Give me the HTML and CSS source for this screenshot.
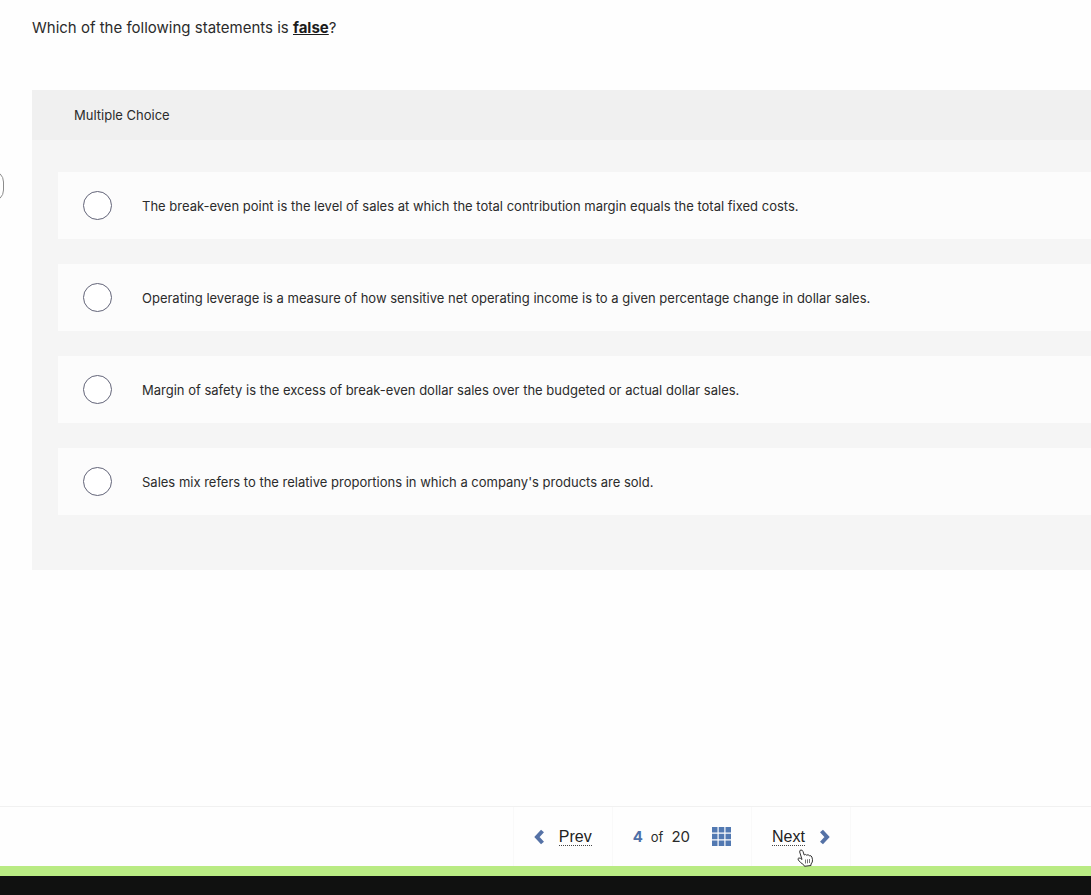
FILE: index.html
```html
<!DOCTYPE html>
<html lang="en">
<head>
  <meta charset="UTF-8">
  <meta name="viewport" content="width=device-width, initial-scale=1.0">
  <title>Question 4 of 20</title>
  <link rel="stylesheet" href="styles.css">
</head>
<body>
  <button type="button" class="drawer-toggle" aria-label="Open panel"></button>

  <main class="content">
    <p class="question">Which of the following statements is <strong>false</strong>?</p>

    <form class="panel">
      <h2 class="panel-title">Multiple Choice</h2>
      <div class="choices">
        <label class="choice" for="choice1">
          <input type="radio" id="choice1" name="answer" value="1">
          <span>The break-even point is the level of sales at which the total contribution margin equals the total fixed costs.</span>
        </label>
        <label class="choice" for="choice2">
          <input type="radio" id="choice2" name="answer" value="2">
          <span>Operating leverage is a measure of how sensitive net operating income is to a given percentage change in dollar sales.</span>
        </label>
        <label class="choice" for="choice3">
          <input type="radio" id="choice3" name="answer" value="3">
          <span>Margin of safety is the excess of break-even dollar sales over the budgeted or actual dollar sales.</span>
        </label>
        <label class="choice" for="choice4">
          <input type="radio" id="choice4" name="answer" value="4">
          <span>Sales mix refers to the relative proportions in which a company's products are sold.</span>
        </label>
      </div>
    </form>
  </main>

  <footer>
    <nav class="pager">
      <a href="#prev" class="pager-link">
        <svg width="10" height="16" viewBox="0 0 10 16"><path d="M8.500 2L3 8l5.500 6"/></svg>
        <span class="pager-text">Prev</span>
      </a>
      <div class="pager-count">
        <span><b>4</b><small>of</small>20</span>
        <button type="button" class="grid-button" aria-label="All questions">
          <svg width="19" height="19" viewBox="0 0 19 19">
            <path d="M0 0h5.500v5.500H0zM6.700 0h5.600v5.500H6.700zM13.500 0H19v5.500h-5.500zM0 6.700h5.500v5.600H0zM6.700 6.700h5.600v5.600H6.700zM13.500 6.700H19v5.600h-5.500zM0 13.500h5.500V19H0zM6.700 13.500h5.600V19H6.700zM13.500 13.500H19V19h-5.500z"/>
          </svg>
        </button>
      </div>
      <a href="#next" class="pager-link pager-next">
        <span class="pager-text">Next</span>
        <svg width="10" height="16" viewBox="0 0 10 16"><path d="M1.500 2L7 8l-5.500 6"/></svg>
        <!-- hand pointer -->
        <svg class="pointer" width="17" height="18" viewBox="0 0 17 18">
          <path d="M5 10.500L2.700 3Q2.500 1 4 1t2 1.500L7.200 6Q8.700 4.800 9.700 6.200 11.200 5 12.300 6.700 14.300 6.200 14.900 8q1 3 .4 5l-1.300 2v1.500l-6.500.8-.8-1.500Q3.500 14 1.300 11 .5 9.300 1.800 9q1.400-.3 3.200 1.500z"/>
          <path class="pointer-lines" d="M8.500 10.500v4M10.500 10.300v4M12.500 10v4"/>
        </svg>
      </a>
    </nav>
    <div class="progress"></div>
    <div class="bottom-bar"></div>
  </footer>
</body>
</html>
```

FILE: styles.css
```css
* {
  box-sizing: border-box;
}

body {
  display: flex;
  flex-direction: column;
  min-height: 100vh;
  margin: 0;
  overflow-x: hidden;
  background-color: #fefefe;
  color: #2b2b2b;
  font-family: Inter, sans-serif;
  font-size: 13px;
}

.content {
  flex: 1;
  padding: 16px 0 0 32px;
}

.question {
  margin: 0 0 50px;
  font-size: 15px;
  line-height: 24px;
}

.question strong {
  color: #1c1c1c;
  text-decoration: underline;
}

.panel {
  background-color: #f5f5f5;
}

.panel-title {
  margin: 0;
  padding: 13px 42px;
  background-color: #f0f0f0;
  font-size: 13px;
  font-weight: 400;
  line-height: 24px;
}

.choices {
  display: flex;
  flex-direction: column;
  gap: 25px;
  padding: 32px 0 55px 26px;
}

.choice {
  display: flex;
  align-items: center;
  gap: 30px;
  min-height: 67px;
  padding: 4px 25px;
  background-color: #fcfcfc;
  cursor: pointer;
}

.choice input {
  flex: none;
  width: 29px;
  height: 29px;
  margin: 0;
  appearance: none;
  background-color: #fff;
  border: 1px solid #626478;
  border-radius: 50%;
}

.choice input:checked {
  box-shadow: inset 0 0 0 6px #fff;
  background-color: #4b6ea9;
}

/* sits over the left edge of the page */
.drawer-toggle {
  position: absolute;
  top: 170px;
  left: -28px;
  width: 32px;
  height: 32px;
  background-color: #fff;
  border: 1px solid #8c8c8c;
  border-radius: 12px;
}

.pager {
  display: flex;
  height: 60px;
  padding-left: 47%;
  border-top: 1px solid #f1f1f1;
  font-size: 16px;
}

.pager-link {
  display: flex;
  align-items: center;
  gap: 15px;
  padding: 0 20px;
  border-left: 1px solid #f9f9f9;
  color: #222;
  font-family: "Liberation Sans", sans-serif;
  text-decoration: none;
}

.pager-next {
  position: relative;
  border-right: 1px solid #f9f9f9;
}

.pager-text {
  border-bottom: 1px dotted #444;
  line-height: 17px;
}

.pager-link svg {
  fill: none;
  stroke: #5572a6;
  stroke-width: 4;
}

.pager-count {
  display: flex;
  align-items: center;
  gap: 22px;
  padding: 0 20px;
  border-left: 1px solid #f9f9f9;
  font-size: 15px;
}

.pager-count b {
  color: #4e70a8;
}

.pager-count small {
  margin: 0 8px;
  font-size: 13px;
}

.grid-button {
  display: flex;
  padding: 0;
  background: none;
  border: 0;
  cursor: pointer;
}

.grid-button svg {
  fill: #5279b2;
}

.pager-link .pointer {
  position: absolute;
  top: 42px;
  left: 45px;
  fill: #fff;
  stroke: #333;
  stroke-width: 1;
}

.pointer .pointer-lines {
  stroke: #777;
}

.progress {
  height: 10px;
  background-color: #b9eb83;
}

.bottom-bar {
  height: 19px;
  background-color: #101110;
}
```
